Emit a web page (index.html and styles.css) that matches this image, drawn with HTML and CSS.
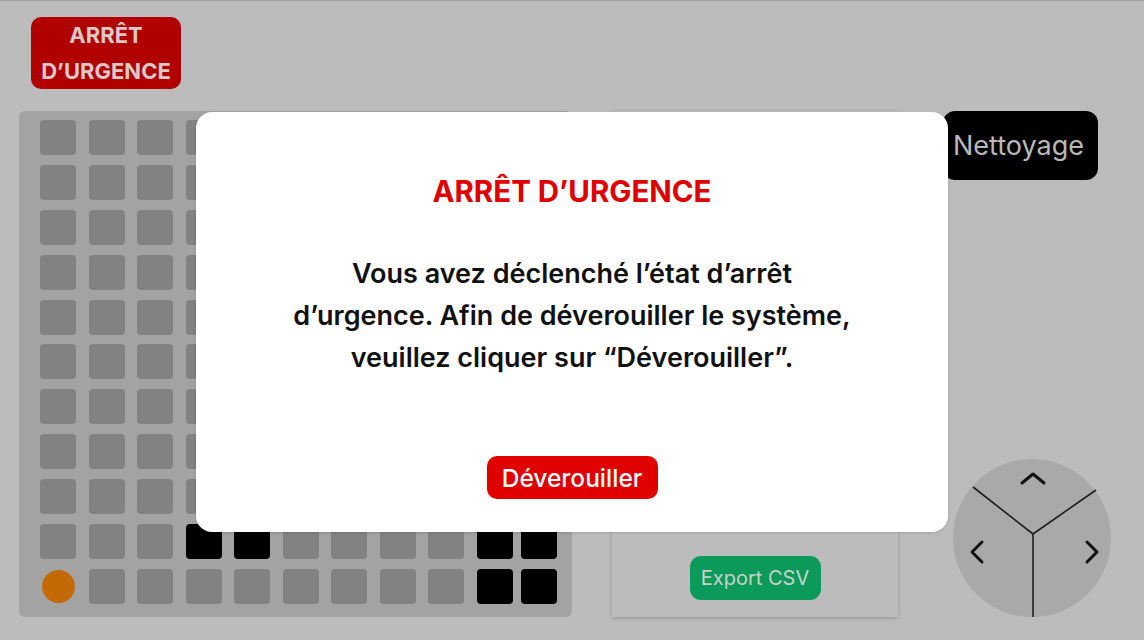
FILE: index.html
```html
<!DOCTYPE html>
<html lang="fr">
<head>
<meta charset="utf-8">
<title>Arrêt d'urgence</title>
<link rel="stylesheet" href="styles.css">
</head>
<body>
<header class="top">
  <button class="estop">ARRÊT<br>D’URGENCE</button>
</header>
<main class="main">
  <section class="grid-panel">
    <div class="grid" id="grid"></div>
  </section>
  <section class="mid-panel">
    <button class="export">Export CSV</button>
  </section>
  <section class="right-col">
    <button class="clean">Nettoyage</button>
    <svg class="joystick" width="158" height="158" viewBox="0 0 158 158">
      <circle cx="79" cy="79" r="79" fill="#a9a9a9"/>
      <g stroke="#1e1e1e" stroke-width="1.6" fill="none">
        <line x1="80" y1="75" x2="20" y2="28"/>
        <line x1="80" y1="75" x2="143" y2="31"/>
        <line x1="80" y1="75" x2="80" y2="163"/>
      </g>
      <g stroke="#111" stroke-width="3" fill="none" stroke-linecap="round" stroke-linejoin="round">
        <polyline points="69,24 80,15 91,24"/>
        <polyline points="29,83 19,93 29,103"/>
        <polyline points="134,83 144,93 134,103"/>
      </g>
    </svg>
  </section>
</main>
<div class="modal">
  <h1 class="modal-title">ARRÊT D’URGENCE</h1>
  <p class="modal-text">Vous avez déclenché l’état d’arrêt<br>d’urgence. Afin de déverouiller le système,<br>veuillez cliquer sur “Déverouiller”.</p>
  <button class="unlock">Déverouiller</button>
</div>
<script>
  var g = document.getElementById('grid');
  var black = {'9-3':1,'9-4':1,'9-9':1,'9-10':1,'10-9':1,'10-10':1};
  for (var r = 0; r < 11; r++) {
    for (var c = 0; c < 11; c++) {
      var d = document.createElement('div');
      d.className = 'cell';
      if (black[r + '-' + c]) d.className += ' on';
      if (r === 10 && c === 0) d.className = 'cell dot';
      g.appendChild(d);
    }
  }
</script>
</body>
</html>
```
FILE: styles.css
```css
* { box-sizing: border-box; }
html, body { margin: 0; padding: 0; }
body {
  width: 1144px;
  height: 640px;
  overflow: hidden;
  background: #bcbcbc;
  border-top: 1px solid #a2a2a2;
  font-family: Inter, "Noto Sans", sans-serif;
  position: relative;
}
button {
  font-family: inherit;
  border: none;
  cursor: pointer;
  padding: 0;
}
.top {
  height: 110px;
  padding: 16px 0 0 31px;
}
.estop {
  width: 150px;
  height: 72px;
  background: #b00000;
  border-radius: 10px;
  color: #dcc8c8;
  font-weight: 700;
  font-size: 22px;
  line-height: 36px;
}
.main {
  display: flex;
  padding-left: 19px;
  height: 506px;
}
.grid-panel {
  width: 553px;
  height: 506px;
  background: #a3a3a3;
  border-radius: 6px;
  padding: 9px 0 0 21px;
}
.grid {
  display: grid;
  grid-template-columns: repeat(9, 48.5px) 44px 36px;
  grid-template-rows: repeat(11, 35px);
  row-gap: 9.9px;
}
.cell {
  width: 36px;
  height: 35px;
  background: #818281;
  border-radius: 4px;
}
.cell.on { background: #000; }
.cell.dot {
  width: 33px;
  height: 33px;
  margin: 1px 0 0 2px;
  border-radius: 50%;
  background: #c36a07;
}
.mid-panel {
  margin-left: 40px;
  width: 286px;
  height: 506px;
  background: #bcbcbc;
  box-shadow: 0 1px 4px rgba(0,0,0,0.22);
  display: flex;
  align-items: flex-end;
  justify-content: center;
  padding-bottom: 17px;
}
.export {
  width: 131px;
  height: 44px;
  background: #0c9a5a;
  border-radius: 11px;
  color: #c6d2cb;
  font-size: 20px;
}
.right-col {
  margin-left: 45px;
  width: 168px;
  display: flex;
  flex-direction: column;
  justify-content: space-between;
  align-items: flex-start;
}
.clean {
  width: 155px;
  height: 69px;
  background: #000;
  border-radius: 12px;
  color: #b9b9b9;
  font-size: 27px;
  padding-left: 10px;
  text-align: left;
  white-space: nowrap;
}
.joystick {
  display: block;
  margin-left: 10px;
}
.modal {
  position: absolute;
  left: 196px;
  top: 111px;
  width: 752px;
  height: 420px;
  background: #fff;
  border-radius: 16px;
  box-shadow: 0 1px 3px rgba(0,0,0,0.12);
  display: flex;
  flex-direction: column;
  align-items: center;
  padding-top: 61px;
}
.modal-title {
  margin: 0;
  color: #e00000;
  font-size: 29.5px;
  font-weight: 700;
  line-height: 36px;
}
.modal-text {
  margin: 44px 0 0;
  text-align: center;
  color: #111;
  font-size: 27px;
  font-weight: 600;
  line-height: 42px;
}
.unlock {
  margin-top: 77px;
  width: 171px;
  height: 43px;
  background: #e00000;
  border-radius: 10px;
  color: #fff;
  font-size: 24.5px;
  font-weight: 500;
}
```
